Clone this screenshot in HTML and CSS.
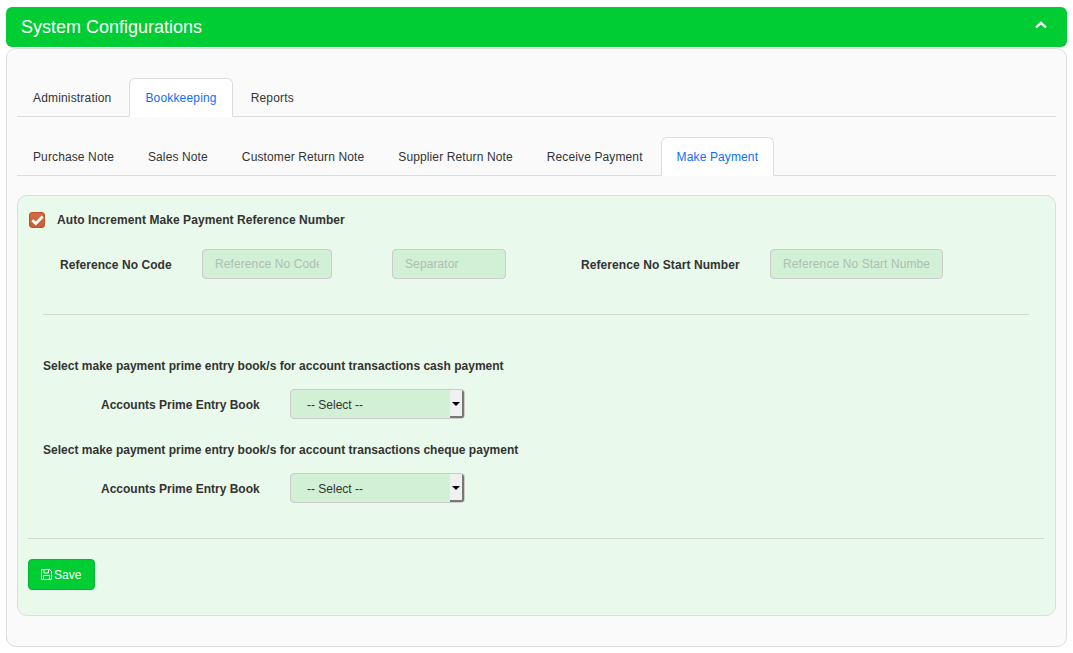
FILE: index.html
```html
<!doctype html>
<html>
  <head>
    <title>System Configurations</title>
    <meta name="viewport" content="width = device-width, initial-scale = 1" />
    <link rel="stylesheet" href="styles.css">
  </head>
  <body>
    <div class="panel-heading">
      <span class="panel-title">System Configurations</span>
      <svg class="collapse-icon" width="12" height="8" viewBox="0 0 12 8">
        <path d="M1 6.5 L6 1.8 L11 6.5" fill="none" stroke="#fff" stroke-width="2.4" />
      </svg>
    </div>
    <div class="panel-body">
      <ul class="tabs tabs-main">
        <li><a href="#">Administration</a></li>
        <li class="active"><a href="#">Bookkeeping</a></li>
        <li><a href="#">Reports</a></li>
      </ul>
      <ul class="tabs tabs-sub">
        <li><a href="#">Purchase Note</a></li>
        <li><a href="#">Sales Note</a></li>
        <li><a href="#">Customer Return Note</a></li>
        <li><a href="#">Supplier Return Note</a></li>
        <li><a href="#">Receive Payment</a></li>
        <li class="active"><a href="#">Make Payment</a></li>
      </ul>
      <div class="well">
        <label class="auto-row">
          <span class="checkbox">
            <svg width="13" height="11" viewBox="0 0 13 11">
              <path d="M1.3 5.2 L4.8 8.6 L11.7 1.6" fill="none" stroke="#fff" stroke-width="2.8" />
            </svg>
          </span>
          Auto Increment Make Payment Reference Number
        </label>
        <div class="ref-row">
          <label class="ref-code-label">Reference No Code</label>
          <input class="input ref-code" type="text" placeholder="Reference No Code" disabled />
          <input class="input ref-sep" type="text" placeholder="Separator" disabled />
          <label class="ref-start-label">Reference No Start Number</label>
          <input class="input ref-start" type="text" placeholder="Reference No Start Number" disabled />
        </div>
        <hr class="rule rule-inner" />
        <div class="books">
          <p class="book-title">Select make payment prime entry book/s for account transactions cash payment</p>
          <div class="book-row">
            <label class="book-label">Accounts Prime Entry Book</label>
            <div class="select-box">
              <span class="select-value">-- Select --</span>
              <span class="select-arrow"></span>
            </div>
          </div>
          <p class="book-title">Select make payment prime entry book/s for account transactions cheque payment</p>
          <div class="book-row">
            <label class="book-label">Accounts Prime Entry Book</label>
            <div class="select-box">
              <span class="select-value">-- Select --</span>
              <span class="select-arrow"></span>
            </div>
          </div>
        </div>
        <hr class="rule rule-outer" />
        <button class="btn-save" type="button">
          <svg width="11" height="11" viewBox="0 0 11 11">
            <path d="M0.5 0.5 H8.5 L10.5 2.5 V10.5 H0.5 Z" fill="none" stroke="#fff" />
            <path d="M3 1 V4 H7.5 V1 M2.5 10 V6.5 H8.5 V10" fill="none" stroke="#fff" />
          </svg>
          Save
        </button>
      </div>
    </div>
  </body>
</html>
```

FILE: styles.css
```css
* {
  box-sizing: border-box;
}

body,
html {
  margin: 0;
  height: 100%;
  background-color: #ffffff;
}

body {
  padding: 7px 6px 0;
  font-family: "Liberation Sans", Arial, sans-serif;
  font-size: 12px;
  color: #333333;
}

.panel-heading {
  display: flex;
  align-items: center;
  justify-content: space-between;
  height: 40px;
  padding: 0 20px 0 15px;
  background-color: #00cc33;
  border-radius: 6px;
}

.panel-title {
  font-size: 18px;
  color: white;
}

.collapse-icon {
  margin-top: -4px;
}

.panel-body {
  height: 599px;
  margin-top: 1px;
  padding: 29px 10px 0;
  background-color: #fafafa;
  border: 1px solid #dddddd;
  border-radius: 10px;
}

.tabs {
  display: flex;
  list-style: none;
  margin: 0;
  padding: 0;
  height: 39px;
  letter-spacing: 0.12px;
  border-bottom: 1px solid #dddddd;
}

.tabs-main {
  letter-spacing: 0.17px;
}

.tabs-sub {
  margin-top: 20px;
}

.tabs li {
  height: 39px;
  margin-right: 2px;
}

.tabs a {
  display: block;
  height: 39px;
  padding: 12px 15px 0;
  color: #333333;
  text-decoration: none;
  border: 1px solid transparent;
  border-radius: 6px 6px 0 0;
}

.tabs .active a {
  color: #0d6efd;
  background-color: white;
  border-color: #dddddd #dddddd white;
}

.well {
  height: 421px;
  margin-top: 19px;
  padding: 0 10px;
  background-color: #e9f9eb;
  border: 1px solid #dddddd;
  border-radius: 10px;
}

.auto-row {
  display: flex;
  align-items: center;
  gap: 12px;
  height: 18px;
  margin: 15px 0 0 1px;
  font-weight: bold;
  letter-spacing: 0.07px;
}

.checkbox {
  display: flex;
  align-items: center;
  justify-content: center;
  width: 16px;
  height: 16px;
  background: linear-gradient(#d8683f, #c85c35);
  border: 1px solid #b9532e;
  border-radius: 3px;
}

.ref-row {
  display: flex;
  align-items: center;
  height: 30px;
  margin-top: 20px;
  font-weight: bold;
}

.ref-code-label {
  width: 142px;
  margin: 2px 0 0 32px;
  letter-spacing: 0.06px;
}

.input {
  height: 30px;
  padding: 0 12px;
  font-family: inherit;
  font-size: 12px;
  letter-spacing: 0.1px;
  background-color: #d1f0d6;
  border: 1px solid #cccccc;
  border-radius: 4px;
}

.input::placeholder {
  color: #aebfb1;
  opacity: 1;
}

.ref-code {
  width: 130px;
}

.ref-sep {
  width: 114px;
  margin-left: 60px;
}

.ref-start-label {
  width: 189px;
  margin: 2px 0 0 75px;
  letter-spacing: 0.08px;
}

.ref-start {
  width: 173px;
}

.rule {
  height: 1px;
  margin: 0;
  background-color: #d4d4d4;
  border: 0;
}

.rule-inner {
  margin: 35px 16px 0 15px;
}

.books {
  padding-left: 15px;
}

.book-title {
  height: 14px;
  margin: 0;
  font-weight: bold;
  line-height: 14px;
  letter-spacing: 0.015px;
}

.books .book-title:first-child {
  margin-top: 44px;
}

.book-row {
  display: flex;
  align-items: center;
  height: 30px;
  margin: 16px 0 24px;
}

.book-label {
  width: 189px;
  margin: 2px 0 0 58px;
  font-weight: bold;
}

.select-box {
  display: flex;
  width: 175px;
  height: 30px;
  background-color: #d1f0d6;
  border: 1px solid #cccccc;
  border-radius: 4px;
  overflow: hidden;
}

.select-value {
  flex: 1;
  padding: 8px 0 0 16px;
}

.select-arrow {
  position: relative;
  width: 14px;
  background-color: #f0f0f0;
  border-right: 2px solid #777777;
  border-bottom: 2px solid #777777;
}

.select-arrow::after {
  content: "";
  position: absolute;
  top: 12px;
  left: 2px;
  border-left: 4px solid transparent;
  border-right: 4px solid transparent;
  border-top: 4px solid black;
}

.rule-outer {
  margin: 35px 1px 0 0;
}

.btn-save {
  display: flex;
  align-items: center;
  gap: 2px;
  width: 67px;
  height: 31px;
  margin-top: 20px;
  padding: 0 0 0 12px;
  font-family: inherit;
  font-size: 12px;
  color: white;
  background-color: #00cc33;
  border: 1px solid #00b82d;
  border-radius: 4px;
  cursor: pointer;
}
```
